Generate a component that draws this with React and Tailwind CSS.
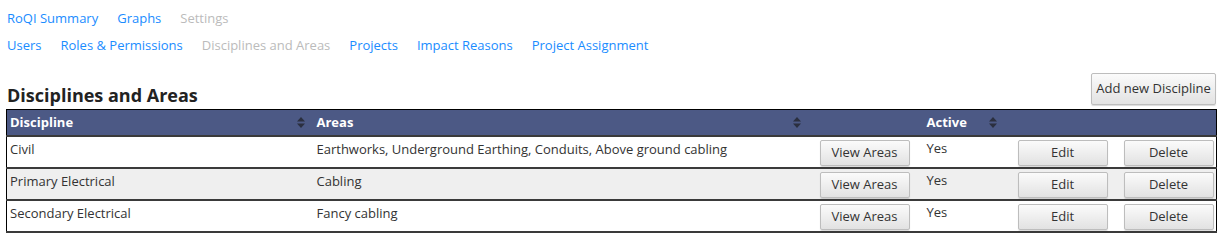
const font = { fontFamily: '"Open Sans", "Liberation Sans", sans-serif' };

const rows = [
  { name: 'Civil', areas: 'Earthworks, Underground Earthing, Conduits, Above ground cabling', active: 'Yes' },
  { name: 'Primary Electrical', areas: 'Cabling', active: 'Yes' },
  { name: 'Secondary Electrical', areas: 'Fancy cabling', active: 'Yes' },
];

const SortIcon = () => (
  <svg width="8" height="11" viewBox="0 0 8 11" className="inline-block">
    <path d="M4 0 L8 4.5 L0 4.5 Z" fill="#2b2f3f" />
    <path d="M4 11 L8 6.5 L0 6.5 Z" fill="#2b2f3f" />
  </svg>
);

const Btn = ({ children, className = '' }) => (
  <button className={`h-[26px] rounded-[2px] border border-[#bdbdbd] bg-gradient-to-b from-[#fbfbfb] to-[#e2e2e2] text-[13px] text-[#333] shadow-[0_1px_1px_rgba(0,0,0,0.15)] ${className}`}>
    {children}
  </button>
);

export default function App() {
  return (
    <div className="w-[1225px] h-[244px] bg-white text-[13px] text-[#333]" style={font}>
      <nav className="flex gap-[19px] pl-[7px] pt-[8px] leading-[20px] text-[#1a8cff]">
        <a>RoQI Summary</a>
        <a>Graphs</a>
        <a className="text-[#bbbbbb]">Settings</a>
      </nav>
      <nav className="flex gap-[19px] pl-[7px] mt-[7px] leading-[20px] text-[#1a8cff]">
        <a>Users</a>
        <a>Roles &amp; Permissions</a>
        <a className="text-[#bbbbbb]">Disciplines and Areas</a>
        <a>Projects</a>
        <a>Impact Reasons</a>
        <a>Project Assignment</a>
      </nav>

      <div className="flex items-end justify-between pl-[7px] pr-[9px] mt-[18px]">
        <h2 className="text-[18px] font-bold text-[#222] leading-[24px] mb-[-2px]">Disciplines and Areas</h2>
        <Btn className="h-[32px] w-[125px]">Add new Discipline</Btn>
      </div>

      <div className="pl-[6px] pr-[8px] mt-[4px]">
        <table className="w-[1210px] table-fixed border-collapse border border-black">
          <colgroup>
            <col className="w-[304px]" />
            <col className="w-[496px]" />
            <col className="w-[116px]" />
            <col className="w-[86px]" />
            <col className="w-[106px]" />
            <col className="w-[102px]" />
          </colgroup>
          <thead>
            <tr className="bg-[#4c5985] text-white h-[26px] border-b-2 border-[#3a3a3a]">
              <th className="text-left font-bold pl-[3px] pr-[6px]">
                <div className="flex items-center justify-between">Discipline<SortIcon /></div>
              </th>
              <th className="text-left font-bold pl-[6px] pr-[6px]">
                <div className="flex items-center justify-between">Areas<SortIcon /></div>
              </th>
              <th></th>
              <th className="text-left font-bold pl-[4px] pr-[12px]">
                <div className="flex items-center justify-between">Active<SortIcon /></div>
              </th>
              <th></th>
              <th></th>
            </tr>
          </thead>
          <tbody>
            {rows.map((r, i) => (
              <tr key={i} className={`h-[32px] border-b-2 border-[#3a3a3a] ${i === 1 ? 'bg-[#efefef]' : 'bg-white'}`}>
                <td className="align-top pl-[3px] pt-[3px]">{r.name}</td>
                <td className="align-top pl-[6px] pt-[3px]">{r.areas}</td>
                <td className="align-top pt-[3px] pl-[13px]"><Btn className="w-[90px]">View Areas</Btn></td>
                <td className="align-top pl-[4px] pt-[2px]">{r.active}</td>
                <td className="align-top pt-[3px] pl-[9px]"><Btn className="w-[90px]">Edit</Btn></td>
                <td className="align-top pt-[3px] pl-[9px]"><Btn className="w-[90px]">Delete</Btn></td>
              </tr>
            ))}
          </tbody>
        </table>
      </div>
    </div>
  );
}
